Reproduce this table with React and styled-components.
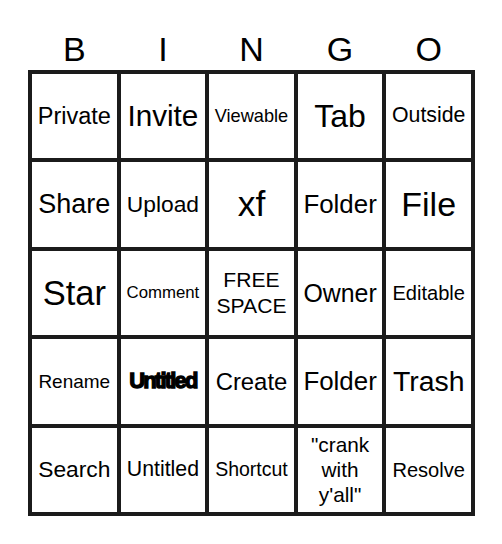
import React from 'react';
import styled, { createGlobalStyle } from 'styled-components';

const GlobalStyle = createGlobalStyle`
  body {
    margin: 0;
    background: #ffffff;
    font-family: "Liberation Sans", Arial, sans-serif;
  }
`;

const LETTERS = ['B', 'I', 'N', 'G', 'O'];

// each square: label, font size (px), optional bold look
const SQUARES = [
  ['Private', 23.5], ['Invite', 29.7], ['Viewable', 18.2], ['Tab', 32], ['Outside', 21.3],
  ['Share', 27], ['Upload', 22.8], ['xf', 35.5], ['Folder', 25.9], ['File', 34],
  ['Star', 34.5], ['Comment', 16.8], ['FREE SPACE', 21.1], ['Owner', 24.9], ['Editable', 20.1],
  ['Rename', 19], ['Untitled', 22, true], ['Create', 23.9], ['Folder', 25.9], ['Trash', 28.4],
  ['Search', 22.8], ['Untitled', 21.3], ['Shortcut', 19.5], ['"crank with y\'all"', 20.8], ['Resolve', 20.1],
];

const Card = styled.div`
  width: 447px;
  margin-left: 28px;
  padding-top: 32px;
`;

const Header = styled.div`
  display: grid;
  grid-template-columns: repeat(5, 1fr);
  padding: 0 4px;
  gap: 4px;
  height: 34px;
  margin-bottom: 4px;
`;

const Letter = styled.div`
  text-align: center;
  font-size: 34px;
  line-height: 34px;
  color: #000;
`;

const Grid = styled.div`
  display: grid;
  grid-template-columns: repeat(5, 1fr);
  grid-auto-rows: 84.4px;
  gap: 4px;
  padding: 4px;
  background: #1b1b1b;
`;

const Square = styled.div`
  background: #fff;
  display: flex;
  align-items: center;
  justify-content: center;
  text-align: center;
  padding: 0 2px;
  color: #000;
  font-size: ${(p) => p.$size}px;
  line-height: 1.22;
  font-weight: ${(p) => (p.$heavy ? 700 : 400)};
  letter-spacing: ${(p) => (p.$heavy ? '-1.8px' : 'normal')};
  -webkit-text-stroke: ${(p) => (p.$heavy ? '1.3px #000' : '0')};
`;

const App = () => {
  return (
    <>
      <GlobalStyle />
      <Card>
        <Header>
          {LETTERS.map((l) => (
            <Letter key={l}>{l}</Letter>
          ))}
        </Header>
        <Grid>
          {SQUARES.map(([label, size, heavy], i) => (
            <Square key={i} $size={size} $heavy={heavy}>
              {label}
            </Square>
          ))}
        </Grid>
      </Card>
    </>
  );
};

export default App;
